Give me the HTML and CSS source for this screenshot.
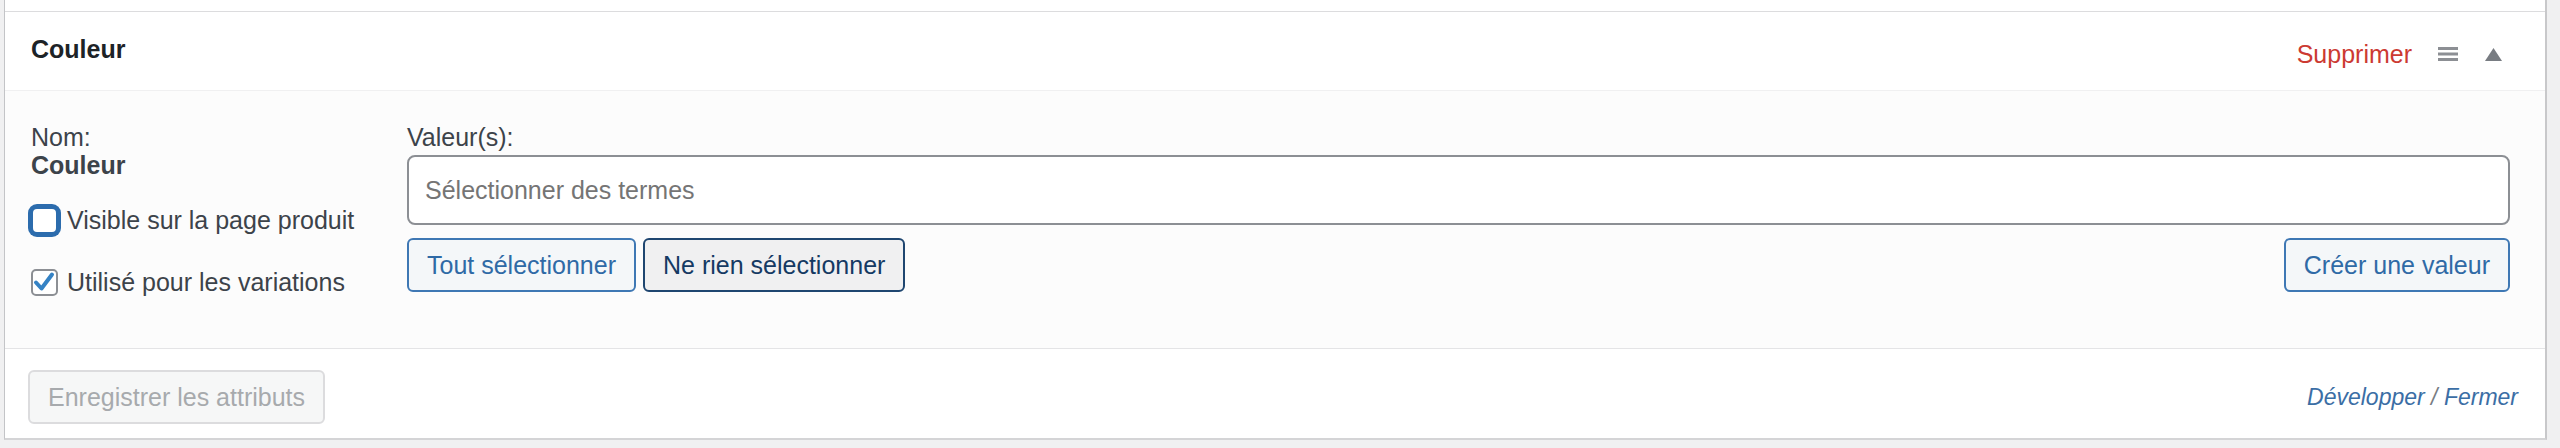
FILE: index.html
```html
<!DOCTYPE html>
<html lang="fr">
<head>
<meta charset="utf-8">
<title>Attribut Couleur</title>
<link rel="stylesheet" href="styles.css">
</head>
<body>
<div class="panel">
  <div class="attr">
    <div class="attr-head">
      <h3 class="attr-title">Couleur</h3>
      <div class="head-actions">
        <a class="delete" href="#">Supprimer</a>
        <span class="handle" aria-hidden="true">
          <svg width="20" height="14" viewBox="0 0 20 14"><rect x="0" y="0" width="20" height="3" fill="#8c8f94"/><rect x="0" y="5.5" width="20" height="3" fill="#8c8f94"/><rect x="0" y="11" width="20" height="3" fill="#8c8f94"/></svg>
        </span>
        <span class="toggle" aria-hidden="true">
          <svg width="17" height="13" viewBox="0 0 17 13"><polygon points="8.5,0 17,13 0,13" fill="#787c82"/></svg>
        </span>
      </div>
    </div>
    <div class="attr-body">
      <div class="col-left">
        <div class="label">Nom:</div>
        <div class="name">Couleur</div>
        <label class="check-row first">
          <span class="cb cb-focus"></span>
          <span>Visible sur la page produit</span>
        </label>
        <label class="check-row second">
          <span class="cb cb-checked">
            <svg width="26" height="26" viewBox="0 0 26 26"><polyline points="5,13.5 10.5,19.5 21,5.5" fill="none" stroke="#3582c4" stroke-width="4" stroke-linecap="round" stroke-linejoin="round"/></svg>
          </span>
          <span>Utilisé pour les variations</span>
        </label>
      </div>
      <div class="col-right">
        <div class="label">Valeur(s):</div>
        <div class="select">Sélectionner des termes</div>
        <div class="btn-row">
          <div class="btn-group">
            <button class="btn">Tout sélectionner</button>
            <button class="btn btn-active">Ne rien sélectionner</button>
          </div>
          <button class="btn">Créer une valeur</button>
        </div>
      </div>
    </div>
  </div>
  <div class="footer">
    <button class="btn btn-disabled">Enregistrer les attributs</button>
    <div class="expand"><a href="#">Développer</a> <span class="sep">/</span> <a href="#">Fermer</a></div>
  </div>
</div>
</body>
</html>
```
FILE: styles.css
```css
* { box-sizing: border-box; }
html, body { margin: 0; padding: 0; }
body {
  background: #f0f0f1;
  font-family: "Liberation Sans", Arial, sans-serif;
  font-size: 25px;
  color: #3c434a;
  width: 2560px;
  height: 448px;
  overflow: hidden;
}
.panel {
  margin-left: 4px;
  width: 2543px;
  height: 440px;
  background: #fff;
  border-left: 1px solid #c3c4c7;
  border-right: 2px solid #c8c8ca;
  border-bottom: 2px solid #d4d4d6;
  padding-top: 11px;
}
.attr {
  border-top: 2px solid #dcdcde;
}
.attr-head {
  height: 79px;
  margin-top: -1px;
  border-bottom: 1px solid #f0f0f1;
  display: flex;
  justify-content: space-between;
  align-items: flex-start;
  padding: 22px 43px 0 26px;
  background: #fff;
}
.attr-title {
  margin: 0;
  font-size: 25px;
  line-height: 30px;
  font-weight: bold;
  color: #1d2327;
}
.head-actions {
  display: flex;
  align-items: center;
  height: 30px;
  margin-top: 5px;
}
.delete {
  color: #cc3a32;
  text-decoration: none;
  line-height: 30px;
}
.handle { display: flex; margin-left: 26px; }
.toggle { display: flex; margin-left: 27px; }
.attr-body {
  height: 258px;
  background: #fcfcfc;
  border-bottom: 1px solid #e4e4e6;
  display: flex;
  padding: 32px 35px 0 26px;
}
.col-left {
  width: 376px;
  flex: none;
}
.label, .name {
  line-height: 28px;
}
.name {
  font-weight: bold;
  color: #3c434a;
}
.check-row {
  display: flex;
  align-items: center;
  height: 30px;
  color: #3c434a;
}
.check-row.first { margin-top: 26px; }
.check-row.second { margin-top: 32px; }
.cb {
  width: 27px;
  height: 27px;
  flex: none;
  border-radius: 5px;
  background: #fff;
  margin-right: 9px;
  display: flex;
}
.cb-focus {
  border: 2px solid #2c6cad;
  box-shadow: 0 0 0 3px #2c6cad;
  border-radius: 6px;
}
.cb-checked {
  border: 2px solid #8c8f94;
}
.cb-checked svg { margin: -2px; }
.col-right {
  flex: 1;
}
.select {
  margin-top: 4px;
  height: 70px;
  border: 2px solid #8c8f94;
  border-radius: 8px;
  background: #fff;
  color: #757575;
  padding-left: 16px;
  display: flex;
  align-items: center;
}
.btn-row {
  margin-top: 13px;
  display: flex;
  justify-content: space-between;
}
.btn-group { display: flex; gap: 7px; }
.btn {
  font-family: "Liberation Sans", Arial, sans-serif;
  font-size: 25px;
  height: 54px;
  padding: 0 18px;
  border: 2px solid #3f78b4;
  border-radius: 6px;
  background: #f4f7f9;
  color: #2f6aa6;
  line-height: 50px;
  margin: 0;
}
.btn-active {
  border-color: #1f4670;
  background: #f0f0f1;
  color: #153a63;
}
.footer {
  display: flex;
  justify-content: space-between;
  align-items: flex-start;
  padding: 21px 27px 0 23px;
}
.btn-disabled {
  border-color: #dcdcde;
  background: #f6f7f7;
  color: #a7aaad;
}
.expand {
  font-style: italic;
  font-size: 23px;
  line-height: 30px;
  margin-top: 12px;
  color: #787c82;
}
.expand a {
  color: #3b6ea5;
  text-decoration: none;
}
```
